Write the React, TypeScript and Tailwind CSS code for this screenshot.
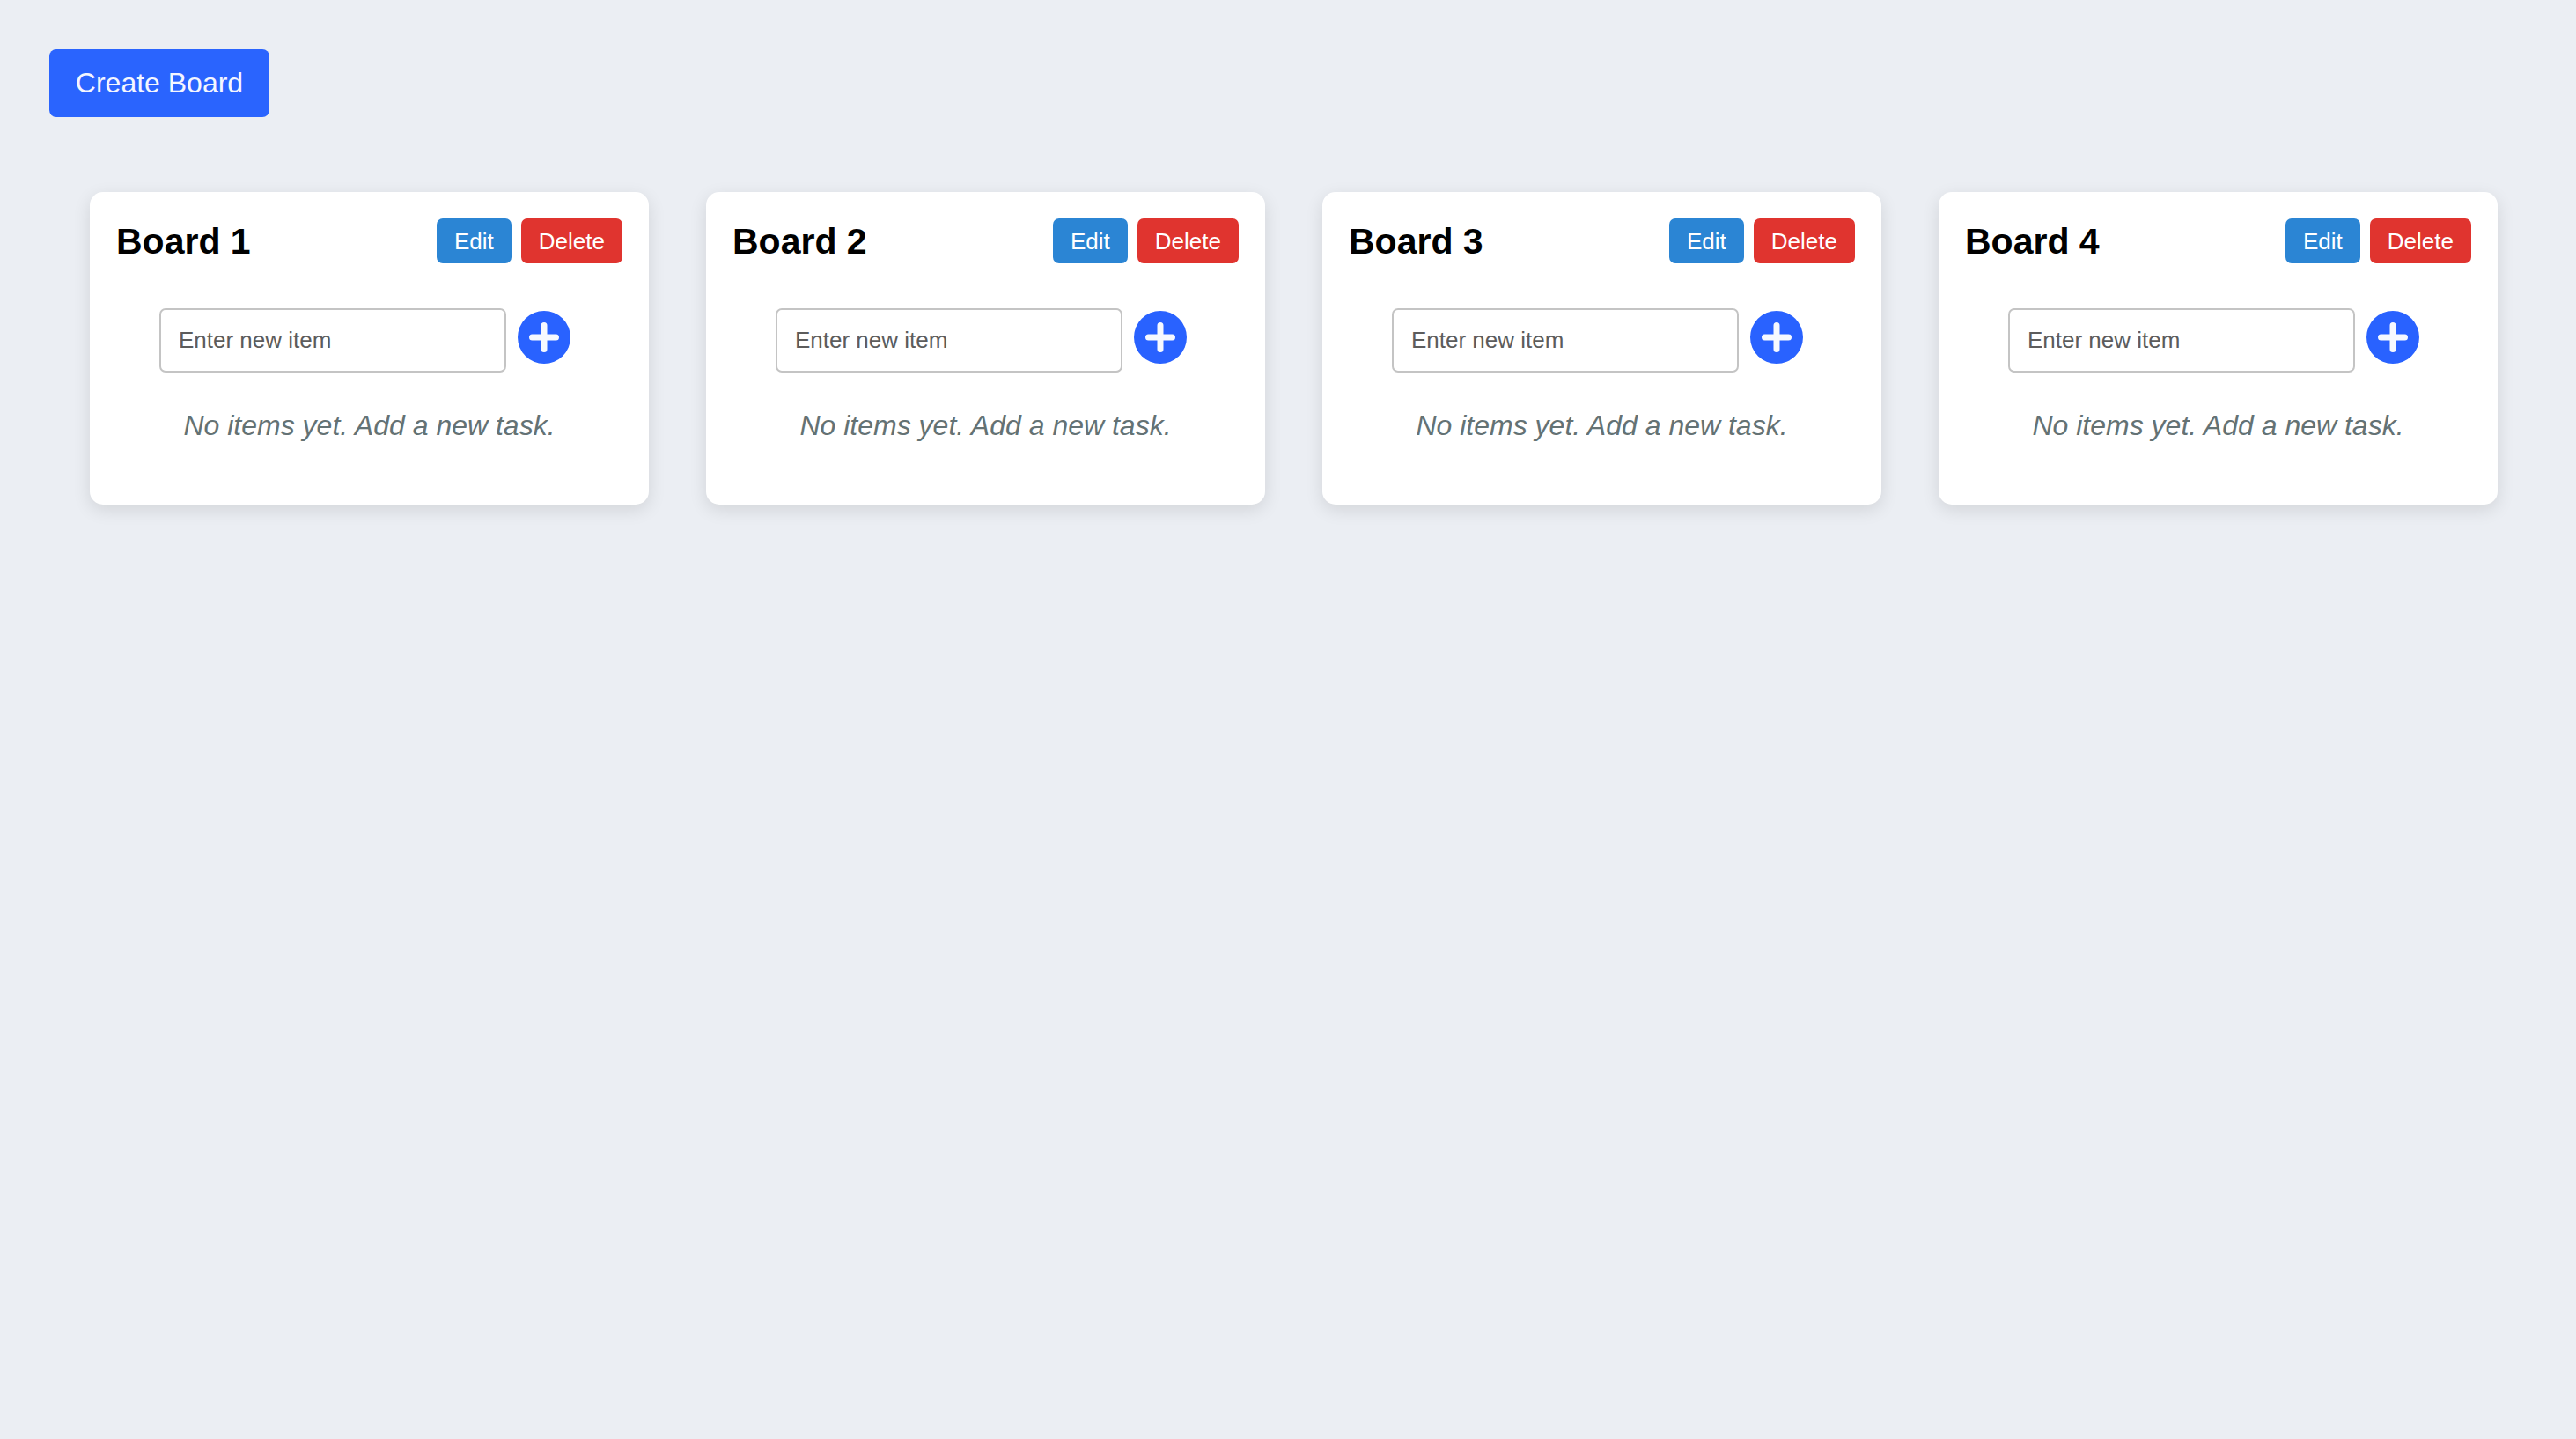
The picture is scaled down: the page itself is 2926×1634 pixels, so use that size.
const boards = ["Board 1", "Board 2", "Board 3", "Board 4"];

const PlusCircle = () => (
  <svg width="60" height="60" viewBox="0 0 60 60">
    <circle cx="30" cy="30" r="30" fill="#2962FF" />
    <path
      d="M30 16.5v27M16.5 30h27"
      stroke="#F6F9FF"
      strokeWidth="7"
      strokeLinecap="round"
    />
  </svg>
);

const BoardCard = ({ title }: { title: string }) => {
  return (
    <div className="w-[635px] h-[355px] shrink-0 rounded-[15px] bg-white px-[30px] pt-[30px] shadow-[0_6px_20px_rgba(0,0,0,0.11)]">
      <div className="flex items-center justify-between h-[51px]">
        <h2 className="text-[41px] leading-[48px] font-bold text-black">
          {title}
        </h2>
        <div className="flex gap-[11px]">
          <button className="h-[51px] px-[20px] rounded-[7px] bg-[#2B85D4] text-[26px] leading-[30px] text-white">
            Edit
          </button>
          <button className="h-[51px] px-[20px] rounded-[7px] bg-[#E0342F] text-[26px] leading-[30px] text-white">
            Delete
          </button>
        </div>
      </div>
      <div className="mt-[51px] flex items-start justify-center">
        <input
          placeholder="Enter new item"
          className="w-[394px] h-[73px] rounded-[7px] border-2 border-[#C4C4C4] px-[20px] text-[26px] placeholder:text-[#5c5c5c] outline-none"
        />
        <button className="ml-[13px] mr-[10px] mt-[3px] h-[60px] w-[60px] rounded-full">
          <PlusCircle />
        </button>
      </div>
      <p className="mt-[42px] text-center text-[32px] leading-[37px] italic text-[#647274]">
        No items yet. Add a new task.
      </p>
    </div>
  );
};

export default function App() {
  return (
    <div className="min-h-screen bg-[#EBEEF3] pt-[56px] pl-[56px] font-['Liberation_Sans',Arial,sans-serif]">
      <button className="h-[77px] w-[250px] rounded-[8px] bg-[#2A64FE] text-[32px] leading-[37px] text-[#F4F6FF]">
        Create Board
      </button>
      <div className="mt-[85px] ml-[46px] flex gap-[65px]">
        {boards.map((b) => (
          <BoardCard key={b} title={b} />
        ))}
      </div>
    </div>
  );
}
